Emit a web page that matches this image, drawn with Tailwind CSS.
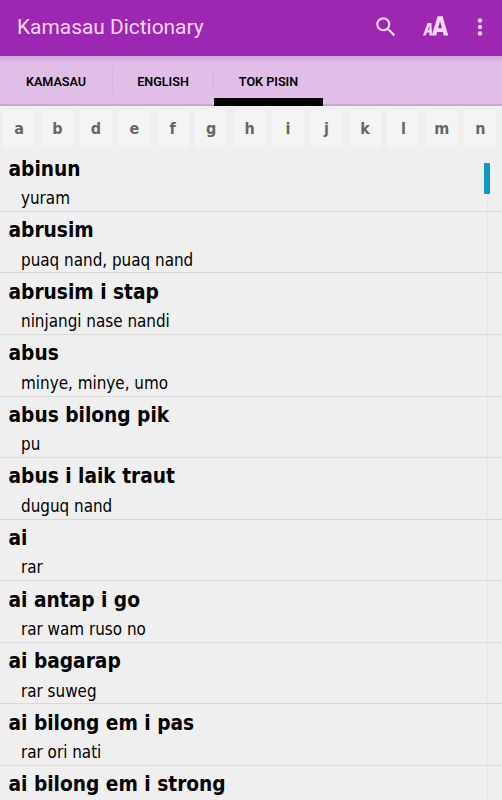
<!DOCTYPE html>
<html lang="en">

<head>
  <meta charset="UTF-8" />
  <meta name="viewport" content="width=device-width, initial-scale=1" />
  <title>Kamasau Dictionary</title>
  <script src="https://cdn.jsdelivr.net/npm/@tailwindcss/browser@4"></script>
</head>

<body class="bg-[#efefef] text-black h-screen overflow-hidden flex flex-col font-['DejaVu_Sans_Condensed','DejaVu_Sans',sans-serif] font-stretch-condensed">

  <!-- App bar -->
  <header class="h-14 shrink-0 bg-[#9c27b0] flex items-center pl-[17px] pr-[19px] text-[#fbd9ff] font-[Roboto,sans-serif] font-stretch-normal">
    <h1 class="text-[20.9px] leading-none pb-px grow">Kamasau Dictionary</h1>
    <svg class="w-[26px] h-[26px] mr-[24px] mb-[3px]" viewBox="0 0 24 24" fill="currentColor">
      <path d="M15.5 14h-.79l-.28-.27A6.47 6.47 0 0 0 16 9.500 6.500 6.500 0 1 0 9.500 16c1.610 0 3.090-.59 4.230-1.570l.27.28v.79l5 4.990L20.490 19l-4.990-5zm-6 0C7.010 14 5 11.990 5 9.500S7.010 5 9.500 5 14 7.010 14 9.500 11.990 14 9.500 14z" />
    </svg>
    <svg class="w-[26px] h-[22px] mr-[28px] mb-[4px]" viewBox="0 0 26 22" fill="currentColor" fill-rule="evenodd">
      <path d="M0 20.500 4.600 8H8.400L9 20.500H6.400V17.600H3.900L2.800 20.500zM4.900 14.800H6.400L6.300 10.800z" />
      <path d="M8.800 20.500 14.600 1.200H19.600L25.200 20.500H20.700L19.800 17H14.100L13.200 20.500zM15 13.200H18.900L17.100 6.200z" />
    </svg>
    <svg class="w-[6px] h-[20px] mb-[3px]" viewBox="0 0 6 20" fill="currentColor">
      <circle cx="3" cy="3.500" r="2.200" />
      <circle cx="3" cy="10" r="2.200" />
      <circle cx="3" cy="16.500" r="2.200" />
    </svg>
  </header>

  <!-- Language tabs -->
  <nav class="h-[50px] shrink-0 flex bg-linear-to-b from-[#cda9d4] via-[#e1bee7] via-15% to-[#e1bee7] border-b-2 border-[#c9a5cf] text-[12.6px] font-semibold font-[Roboto,sans-serif] font-stretch-normal">
    <div class="w-[112px] flex items-center justify-center pt-1">KAMASAU</div>
    <div class="w-[102px] flex items-center">
      <span class="w-px h-[26px] bg-[#d8b4df]"></span>
      <span class="grow text-center pt-1">ENGLISH</span>
      <span class="w-px h-[26px] bg-[#d8b4df]"></span>
    </div>
    <div class="w-[109px] h-[50px] flex items-center justify-center border-b-8 border-black pt-2.5">TOK PISIN</div>
  </nav>

  <!-- Alphabet strip -->
  <div id="letters" class="flex shrink-0 gap-[6.45px] pl-[3px] pt-[4px] h-[44.4px]"></div>

  <!-- Entries -->
  <main class="relative grow overflow-hidden">
    <div id="entries"></div>
    <div class="absolute right-[14px] top-[43px] bottom-0 w-px bg-[#e6e6e6]"></div>
    <div class="absolute right-[12px] top-[12.600px] w-[6px] h-[31px] rounded-[1px] bg-[#0f97c8]"></div>
  </main>

  <script>
    const letters = ['a', 'b', 'd', 'e', 'f', 'g', 'h', 'i', 'j', 'k', 'l', 'm', 'n'];

    const entries = [
      { word: 'abinun', meaning: 'yuram' },
      { word: 'abrusim', meaning: 'puaq nand, puaq nand' },
      { word: 'abrusim i stap', meaning: 'ninjangi nase nandi' },
      { word: 'abus', meaning: 'minye, minye, umo' },
      { word: 'abus bilong pik', meaning: 'pu' },
      { word: 'abus i laik traut', meaning: 'duguq nand' },
      { word: 'ai', meaning: 'rar' },
      { word: 'ai antap i go', meaning: 'rar wam ruso no' },
      { word: 'ai bagarap', meaning: 'rar suweg' },
      { word: 'ai bilong em i pas', meaning: 'rar ori nati' },
      { word: 'ai bilong em i strong', meaning: '' }
    ];

    const letterBar = document.getElementById('letters');
    letters.forEach(letter => {
      const div = document.createElement('div');
      div.textContent = letter;
      div.className = "w-8 h-[37px] shrink-0 rounded-xs bg-[#f4f4f4] text-[#666666] text-base font-bold flex items-center justify-center";
      letterBar.appendChild(div);
    });

    const list = document.getElementById('entries');
    entries.forEach(entry => {
      const row = document.createElement('div');
      row.className = "h-[61.55px] border-b border-[#d9d9d9] pt-[4.3px]";

      const word = document.createElement('p');
      word.textContent = entry.word;
      word.className = "pl-[8.5px] text-[20.7px] leading-[28px] font-bold";
      row.appendChild(word);

      const meaning = document.createElement('p');
      meaning.textContent = entry.meaning;
      meaning.className = "pl-[21px] pt-[2.5px] text-[16.9px] leading-[26px]";
      row.appendChild(meaning);

      list.appendChild(row);
    });
  </script>
</body>

</html>
